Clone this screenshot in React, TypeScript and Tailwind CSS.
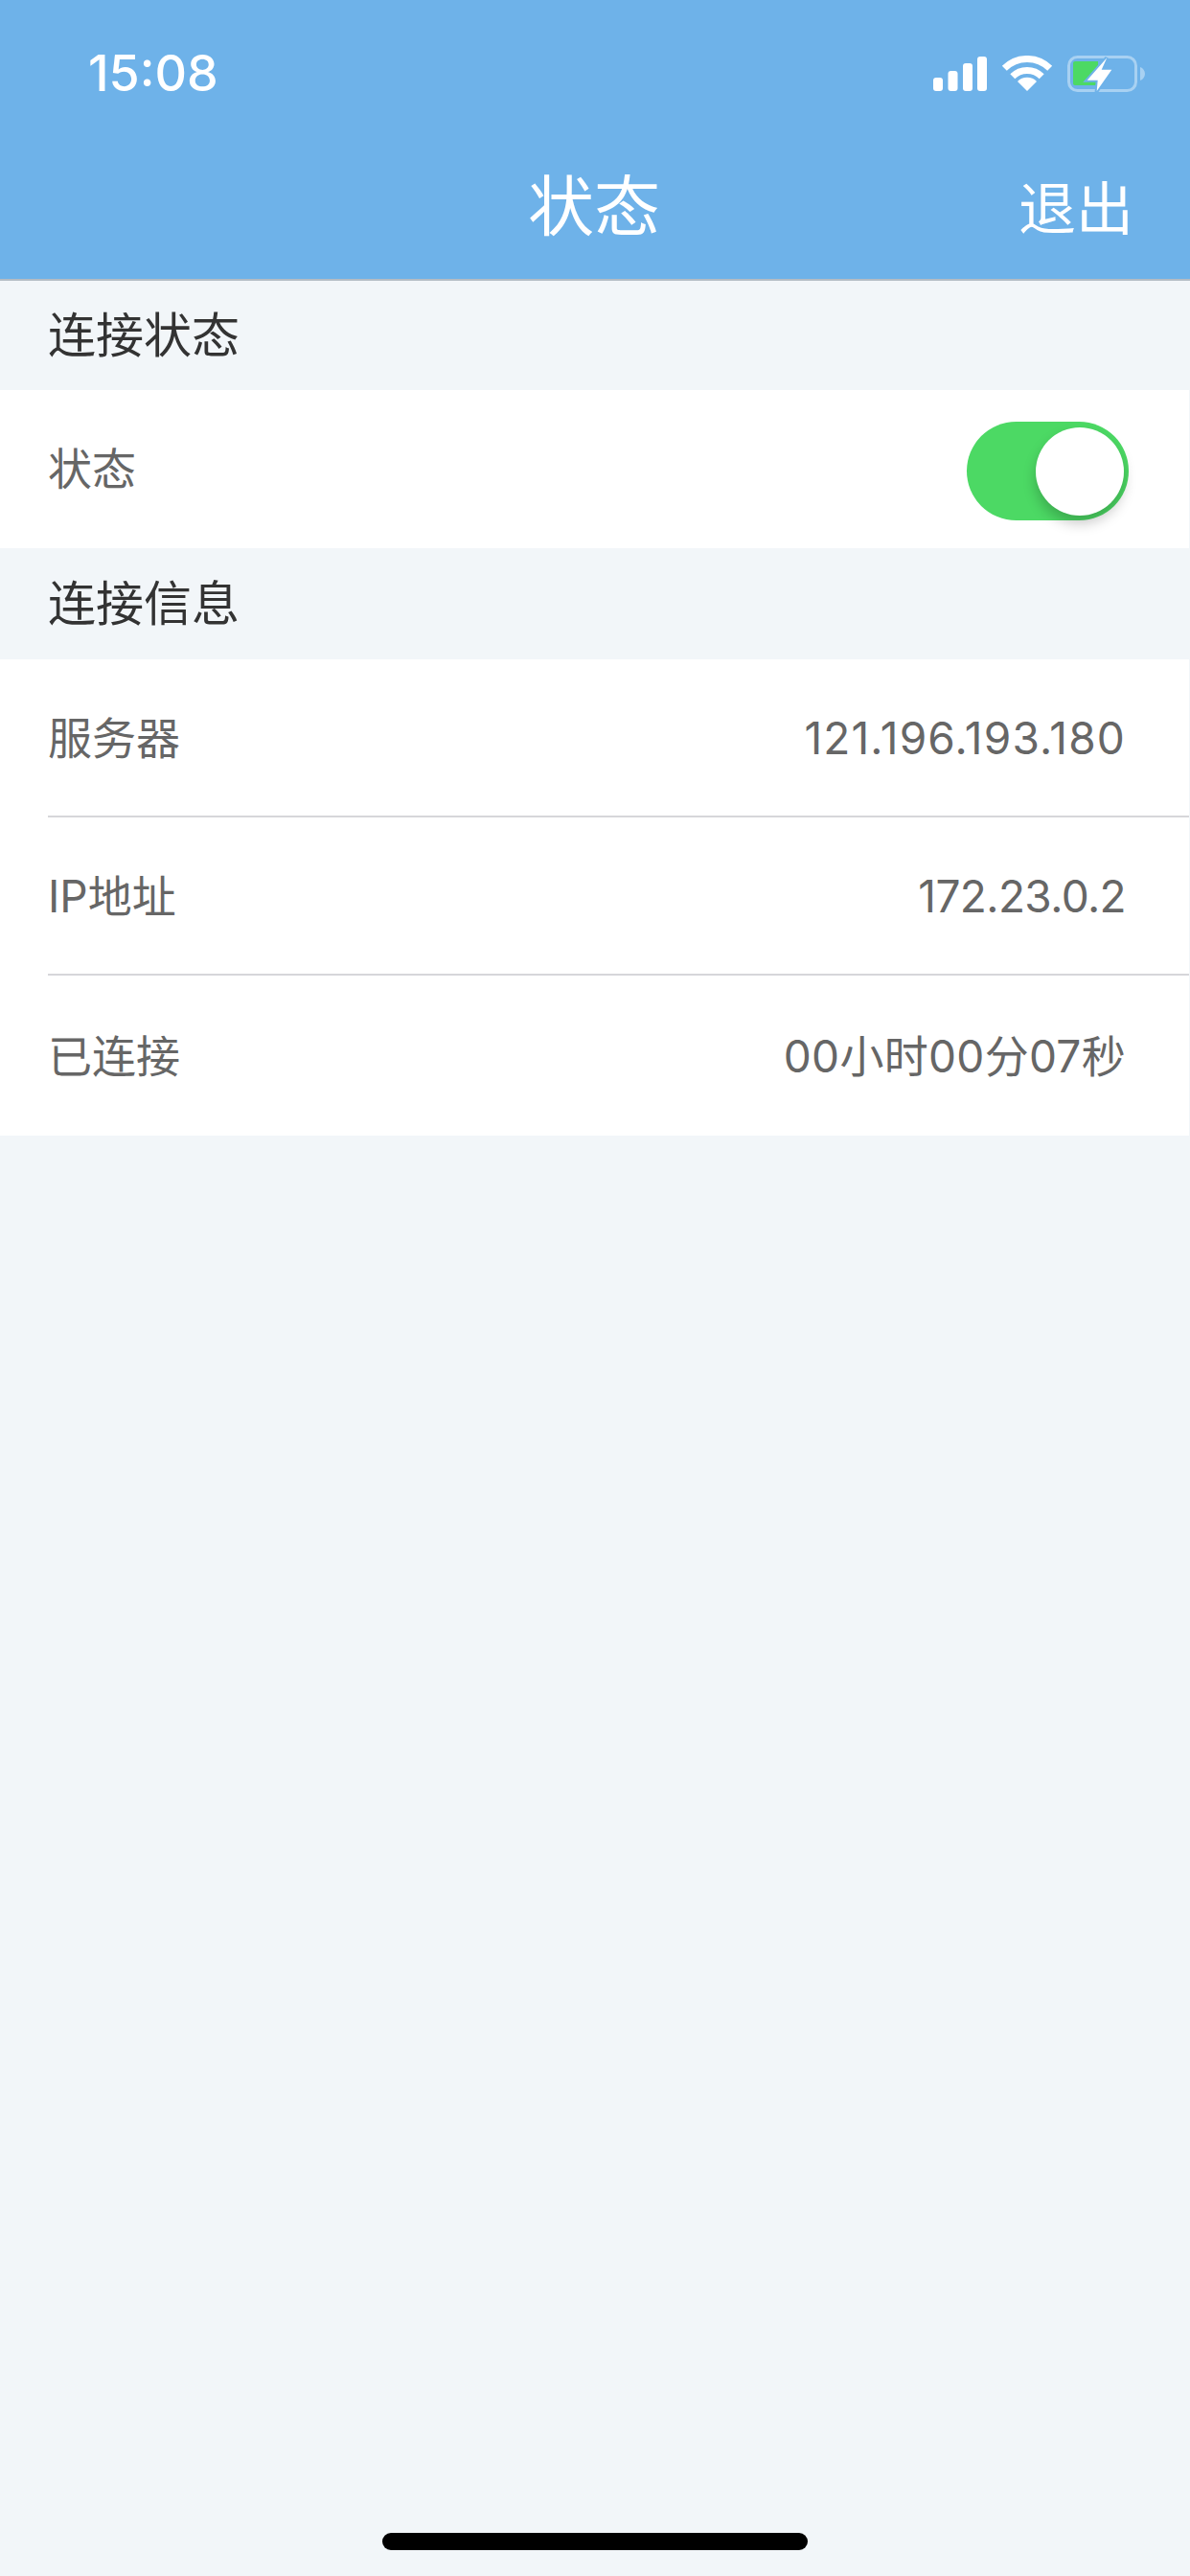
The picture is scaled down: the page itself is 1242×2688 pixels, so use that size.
import React from "react";

const fontStack = "font-['Inter','Noto_Sans_CJK_SC',sans-serif]";

const infoRows = [
  { label: "服务器", value: "121.196.193.180", spacing: "tracking-[1.15px]" },
  { label: "IP地址", value: "172.23.0.2", spacing: "tracking-[-0.6px]" },
  { label: "已连接", value: "00小时00分07秒", spacing: "tracking-[0.3px]" },
];

const StatusIcons = () => (
  <svg width="221" height="38" viewBox="0 0 221 38" fill="none" className="mt-[1px]">
    {/* signal */}
    <rect x="0" y="23" width="10" height="14" rx="3" fill="#fff" />
    <rect x="15.5" y="16" width="10" height="21" rx="3" fill="#fff" />
    <rect x="31" y="8" width="10" height="29" rx="3" fill="#fff" />
    <rect x="46" y="1" width="10" height="36" rx="3" fill="#fff" />
    {/* wifi */}
    <path d="M74.3 13.3A33.5 33.5 0 0 1 121.7 13.3" stroke="#fff" strokeWidth="7" />
    <path d="M82.8 21.8A21.5 21.5 0 0 1 113.2 21.8" stroke="#fff" strokeWidth="7" />
    <path d="M98 37L88 27A14.1 14.1 0 0 1 108 27Z" fill="#fff" />
    {/* battery */}
    <rect x="141.5" y="1.5" width="70" height="35" rx="9" stroke="#fff" strokeOpacity="0.4" strokeWidth="3" />
    <path d="M216 12C219 13 221 16 221 19C221 22 219 25 216 26Z" fill="#fff" fillOpacity="0.4" />
    <path d="M148 6H172V31H148C146.9 31 146 30.1 146 29V8C146 6.9 146.900 6 148 6Z" fill="#4CD964" />
    <path
      d="M181.300 2.300L160.700 25.700H171.700L170.700 37L186.300 14.700H175.700Z"
      fill="#fff"
      stroke="#6EB2E9"
      strokeWidth="4"
      paintOrder="stroke"
    />
  </svg>
);

const Toggle = () => (
  <div className="mt-[4px] flex h-[103px] w-[169px] items-center justify-end rounded-full bg-[#4CD964] pr-[5px]">
    <div className="h-[92px] w-[92px] rounded-full bg-white shadow-[0_8px_14px_rgba(0,0,0,0.22)]" />
  </div>
);

const SectionTitle = ({ title, height }: { title: string; height: string }) => (
  <div className={`flex items-center pl-[50px] text-[50px] text-[#333] ${height}`}>{title}</div>
);

export default function App() {
  return (
    <div className={`flex min-h-[2688px] w-[1242px] flex-col bg-[#F2F6F9] ${fontStack}`}>
      {/* --- HEADER --- */}
      <header className="h-[293px] border-b-2 border-[#B4BCC4] bg-[#6EB2E9] text-white">
        <div className="flex h-[179px] items-start justify-between pl-[92px] pr-[47px] pt-[57px]">
          <span className="text-[52px] font-medium leading-[40px]">15:08</span>
          <StatusIcons />
        </div>
        <div className="flex items-center justify-between pl-[551px] pr-[59px]">
          <span className="text-[69px] font-normal leading-[70px]">状态</span>
          <span className="mt-[4px] text-[60px] font-normal leading-[70px]">退出</span>
        </div>
      </header>

      {/* --- CONNECTION STATUS --- */}
      <SectionTitle title="连接状态" height="h-[114px]" />
      <div className="flex h-[165px] items-center justify-between border-r border-[#F2F6F9] bg-white pl-[50px] pr-[63px]">
        <span className="text-[46px] text-[#666]">状态</span>
        <Toggle />
      </div>

      {/* --- CONNECTION INFO --- */}
      <SectionTitle title="连接信息" height="h-[116px]" />
      <div className="border-r border-[#F2F6F9] bg-white pl-[50px]">
        {infoRows.map((row, index) => (
          <div
            key={index}
            className={`flex items-center justify-between pr-[66px] pt-[2px] text-[46px] text-[#666] ${
              index < infoRows.length - 1 ? "h-[165px] border-b-2 border-[#D6D6DA]" : "h-[167px]"
            }`}
          >
            <span>{row.label}</span>
            <span className={row.spacing}>{row.value}</span>
          </div>
        ))}
      </div>

      {/* --- HOME INDICATOR --- */}
      <div className="mb-[27px] mt-auto h-[18px] w-[444px] self-center rounded-full bg-black" />
    </div>
  );
}
